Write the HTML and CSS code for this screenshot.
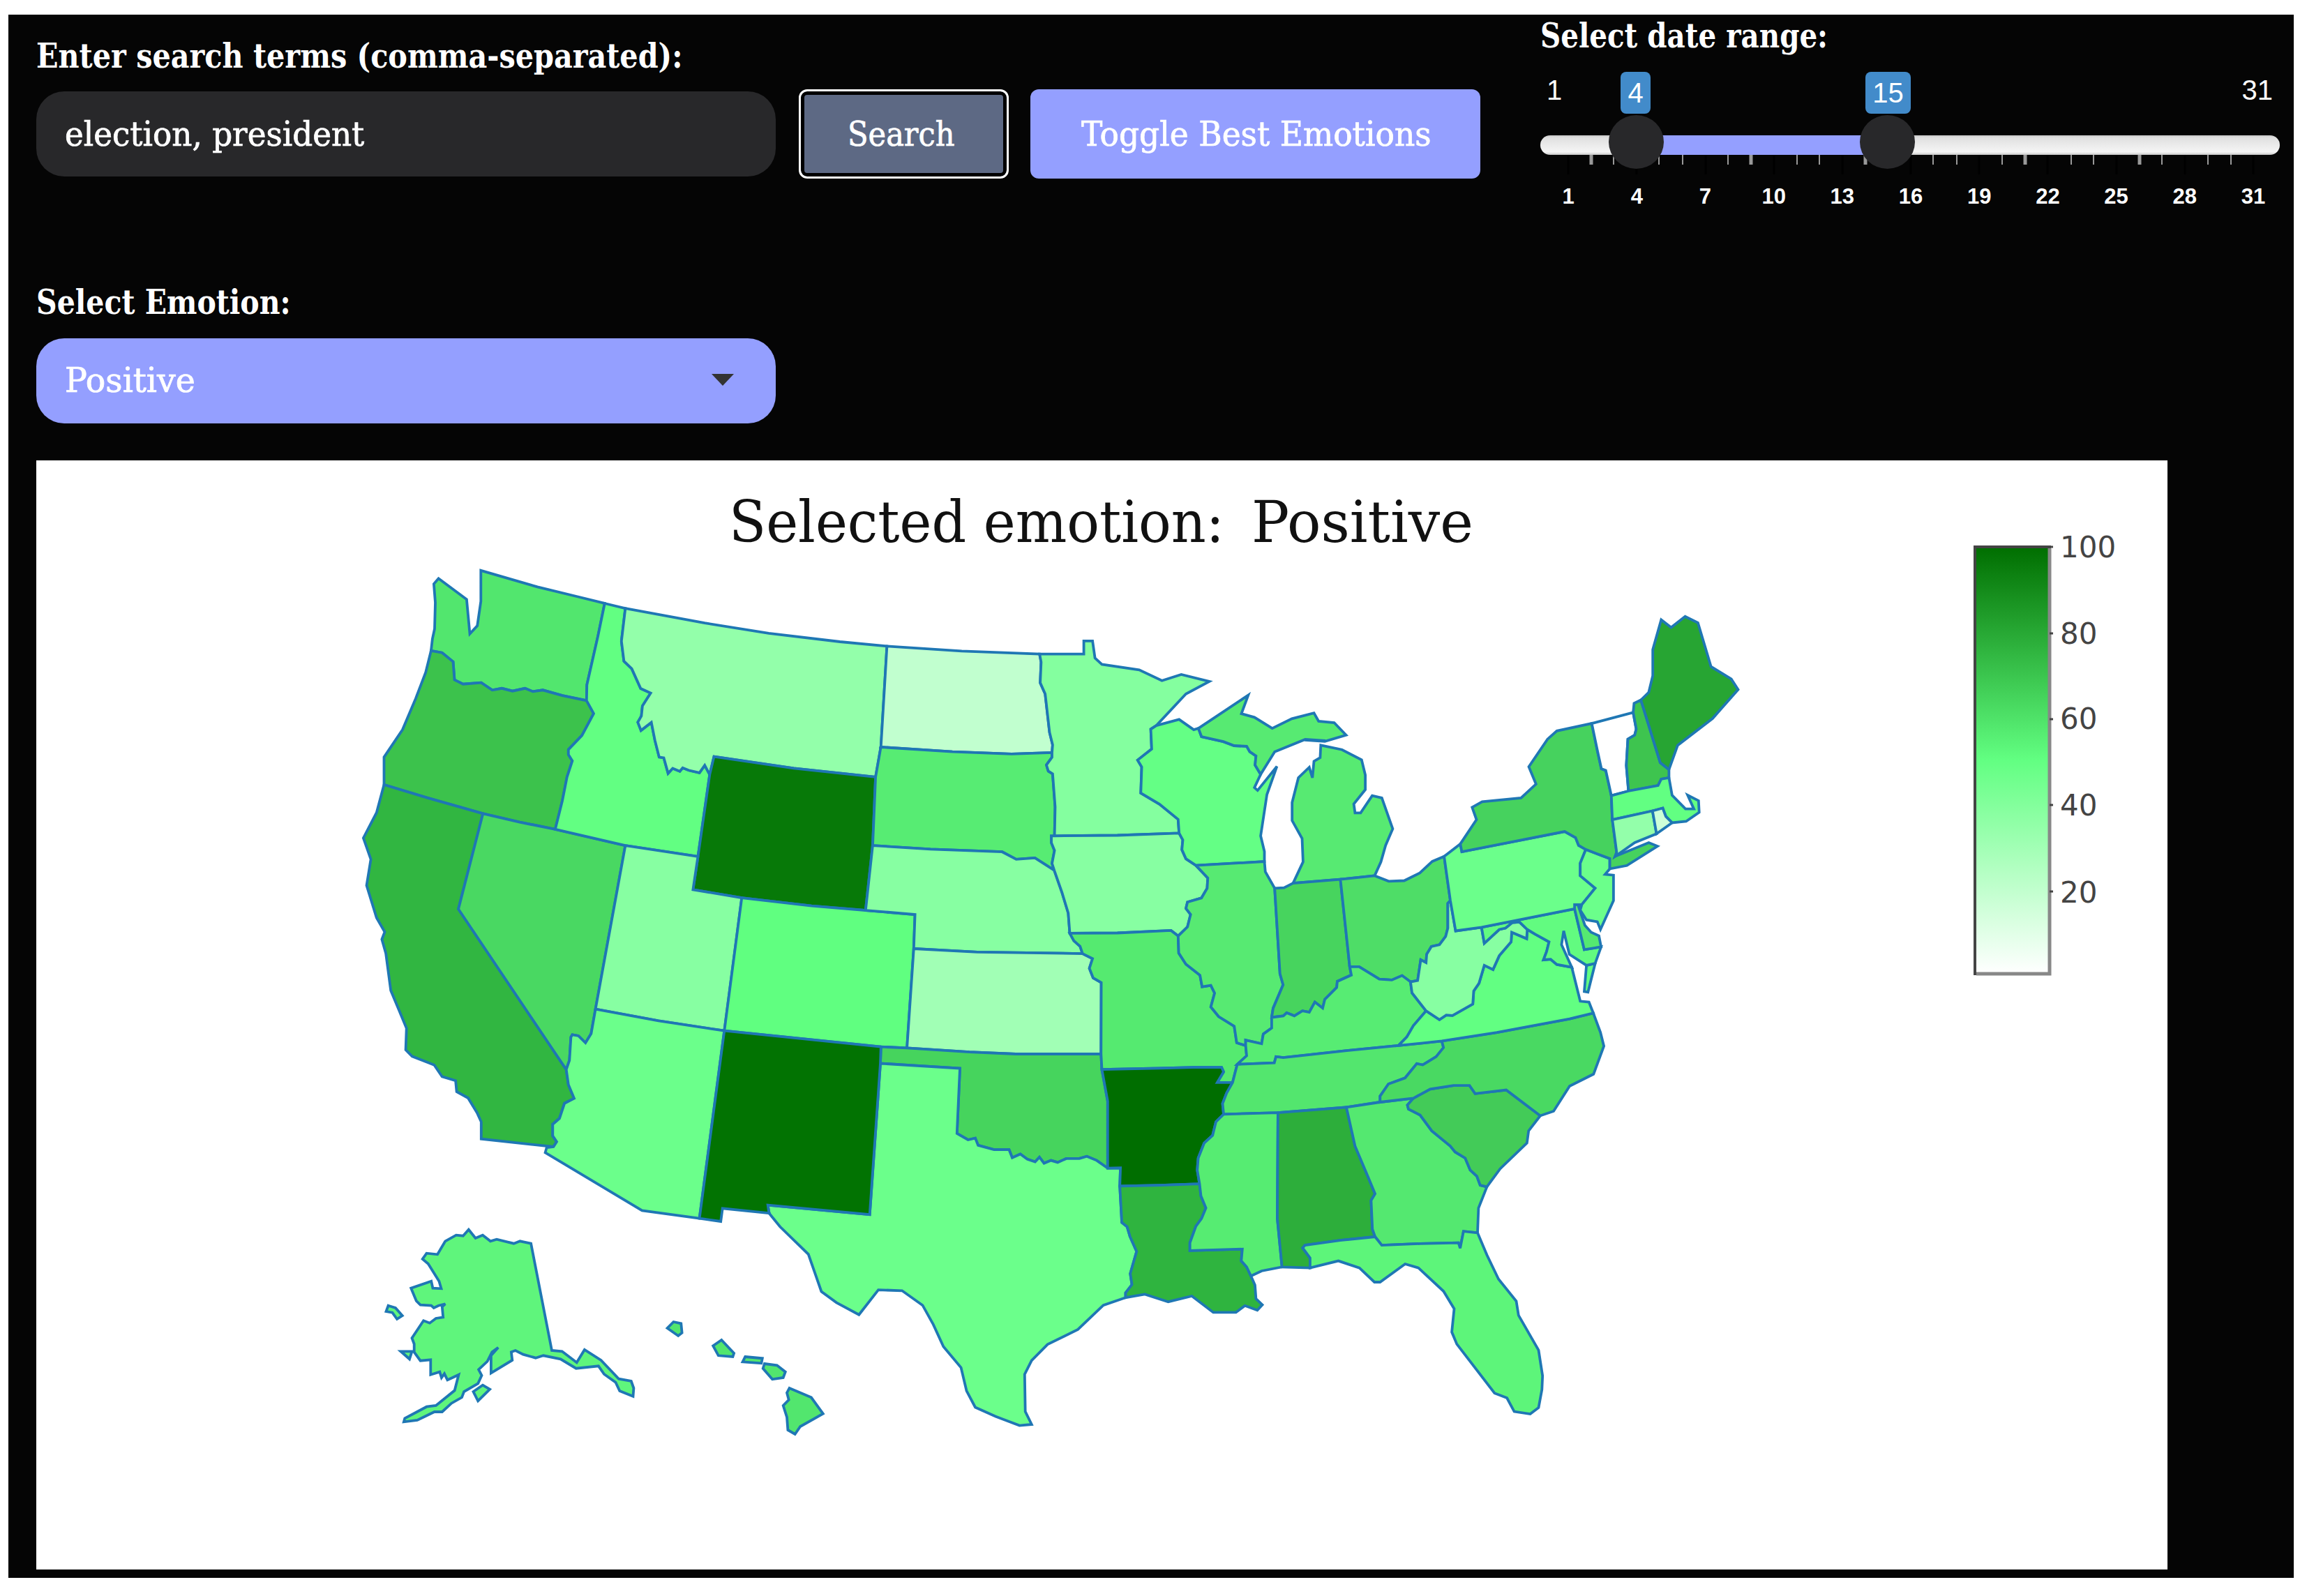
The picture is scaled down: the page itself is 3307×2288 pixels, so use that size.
FILE: index.html
```html
<!DOCTYPE html>
<html lang="en">
<head>
<meta charset="utf-8">
<title>Emotion map</title>
<link rel="stylesheet" href="styles.css">
</head>
<body>
<main class="panel">
  <header class="controls">
    <section class="field search-field">
      <label class="label" for="terms"><span class="t-terms">Enter search terms (comma-separated):</span></label>
      <div class="input" id="terms"><span class="t-input">election, president</span></div>
    </section>
    <div class="buttons">
      <button class="btn btn-search"><span class="t-search">Search</span></button>
      <button class="btn btn-toggle"><span class="t-toggle">Toggle Best Emotions</span></button>
    </div>
    <section class="range">
      <div class="label"><span class="t-range">Select date range:</span></div>
      <div class="slider">
        <div class="limits"><span>1</span><span>31</span></div>
        <div class="track"></div>
        <div class="bar"></div>
        <span class="tag tag-from">4</span>
        <span class="tag tag-to">15</span>
        <svg class="ticks" width="1060" height="30" viewBox="2208 222 1060 30">
          <path class="tick-big" d="M2248 222v28M2346 222v28M2445 222v28M2543 222v28M2641 222v28M2739 222v28M2837 222v28M2935 222v28M3034 222v28M3132 222v28M3230 222v28"/>
          <path class="tick-small" d="M2313 222v14M2378 222v14M2412 222v14M2477 222v14M2576 222v14M2608 222v14M2771 222v14M2805 222v14M2870 222v14M2969 222v14M3001 222v14M3099 222v14M3165 222v14M3198 222v14"/>
          <path class="tick-wide" d="M2281 222v14M2510 222v14M2674 222v14M2903 222v14M3067 222v14"/>
        </svg>
        <i class="handle handle-from"></i>
        <i class="handle handle-to"></i>
        <div class="days"><span>1</span><span>4</span><span>7</span><span>10</span><span>13</span><span>16</span><span>19</span><span>22</span><span>25</span><span>28</span><span>31</span></div>
      </div>
    </section>
  </header>
  <section class="field emotion">
    <div class="label"><span class="t-emotion">Select Emotion:</span></div>
    <div class="select"><span class="t-select">Positive</span><svg width="32" height="17" viewBox="0 0 32 17"><path d="M0 0H32L16 17Z" fill="#333"/></svg></div>
  </section>
  <section class="chart">
    <svg width="3055" height="1590" viewBox="52 660 3055 1590">
      <defs>
        <linearGradient id="scale" x1="0" y1="0" x2="0" y2="1">
          <stop offset="0" stop-color="#006e00"/>
          <stop offset=".5" stop-color="#62ff82"/>
          <stop offset="1" stop-color="#fff"/>
        </linearGradient>
      </defs>
      <text class="title" x="1045" y="777" textLength="710" lengthAdjust="spacingAndGlyphs">Selected emotion:</text>
      <text class="title" x="1794" y="777" textLength="318" lengthAdjust="spacingAndGlyphs">Positive</text>
      <g id="states" class="states"></g>
      <rect class="colorbar" x="2831" y="784" width="107" height="612" fill="url(#scale)"/>
      <path class="cb-shade" d="M2938 786V1396H2833"/>
      <path class="cb-tick" d="M2938 784h5M2938 908h5M2938 1031h5M2938 1154h5M2938 1278h5"/>
      <g class="cb-labels">
        <text x="2953" y="799">100</text>
        <text x="2953" y="923">80</text>
        <text x="2953" y="1045">60</text>
        <text x="2953" y="1169">40</text>
        <text x="2953" y="1294">20</text>
      </g>
    </svg>
  </section>
</main>
<script src="map.js"></script>
</body>
</html>
```
FILE: styles.css
```css
* { box-sizing: border-box; }
body { margin: 0; background: #fff; color: #fff; font-family: "Roboto Slab", "DejaVu Serif Condensed", "DejaVu Serif", serif; }
.panel { margin: 21px 19px 0 12px; height: 2241px; padding: 0 0 12px 40px; background: #050505; display: flex; flex-direction: column; }
.controls { display: flex; height: 354px; }
.search-field { padding-top: 29px; }
.field { width: 1060px; }
.label { display: block; height: 60px; line-height: 60px; font-size: 49px; font-weight: 700; white-space: nowrap; }
.label span, .input span, .select span, .btn span { display: inline-block; transform-origin: 0 50%; white-space: nowrap; }
.input span, .select span, .btn span { -webkit-text-stroke: .7px #fff; }
.label .t-terms { transform: scaleX(.938); }
.label .t-range { transform: scaleX(.917); }
.label .t-emotion { transform: scaleX(.931); }
.input .t-input { transform: scaleX(1.048); }
.select .t-select { transform: scaleX(1.098); }
.btn .t-toggle { transform: scaleX(1.055); }
.input, .select { height: 122px; border-radius: 40px; padding: 0 41px; display: flex; align-items: center; font-size: 48px; }
.input { margin-top: 21px; background: #28282a; }
.select { margin-top: 22px; background: #949fff; justify-content: space-between; padding: 0 60px 3px 41px; }
.emotion { padding-top: 28px; height: 285px; }
.buttons { display: flex; gap: 31px; padding-top: 107px; margin-left: 33px; }
.btn { height: 128px; border: 0; border-radius: 12px; color: #fff; font: 48px "Roboto Slab", "DejaVu Serif Condensed", "DejaVu Serif", serif; display: flex; align-items: center; }
.btn-search { width: 301px; border: 3px solid #fff; box-shadow: inset 0 0 0 5px #000; background: #5d6984; padding: 0 0 0 67px; }
.btn-toggle { width: 645px; background: #949fff; padding: 0 0 0 73px; }
.range { width: 1060px; margin-left: 86px; }
.slider { position: relative; height: 230px; font-family: "Liberation Sans", Arial, sans-serif; font-size: 40px; }
.limits { display: flex; justify-content: space-between; padding: 25px 10px 0 9px; line-height: 46px; }
.track { margin-top: 42px; height: 28px; border-radius: 14px; background: linear-gradient(#c8c8c8, #e0e0e0 12%, #f5f5f5 85%, #c8c8c8); }
.bar { position: absolute; left: 138px; top: 113px; width: 360px; height: 28px; background: #949fff; }
.tag { position: absolute; top: 22px; height: 60px; line-height: 60px; border-radius: 8px; background: #428bca; text-align: center; }
.tag-from { left: 115px; width: 43px; }
.tag-to { left: 466px; width: 65px; }
.ticks { display: block; }
.tick-big { stroke: #000; stroke-width: 3; }
.tick-small { stroke: #999; stroke-width: 2; }
.tick-wide { stroke: #999; stroke-width: 5; }
.handle { position: absolute; top: 84px; width: 79px; height: 77px; border-radius: 50%; background: #28282a; }
.handle-from { left: 98px; }
.handle-to { left: 458px; }
.days { display: grid; grid-template-columns: repeat(11, 98.2px); margin: 10px 0 0 -9px; text-align: center; font-size: 31px; font-weight: 700; line-height: 40px; }
.chart { width: 3055px; height: 1590px; background: #fff; }
.chart svg { display: block; }
.title { font-family: "Roboto Slab", "DejaVu Serif", serif; font-size: 83px; fill: #111; }
.states path { stroke: #1f77b4; stroke-width: 3.8; stroke-linejoin: miter; }
.colorbar { stroke: #444; stroke-width: 4; }
.cb-shade { fill: none; stroke: #888; stroke-width: 5; }
.cb-tick { stroke: #444; stroke-width: 3; }
.cb-labels { font: 42px "DejaVu Sans", Verdana, sans-serif; fill: #444; }
```
FILE: map.js
```javascript
// Sheets of the digitised map: x offset, y offset, units per pixel across and down.
const sheets = {
  A: [500, 780, 1.96, 2.8], B: [500, 1300, 1.96, 3], C: [1200, 880, 2.24, 2.529],
  D: [1500, 1400, 2.0907, 2.3059], E: [1850, 860, 2.24, 2.529],
  F: [520, 1720, 2.24, 3], G: [1000, 1460, 2.4123, 2.529], O: [0, 0, 0.4741, 0.4741]
};

// Shared borders; each is stored once, with the sheet letter before its points.
const arcs = {
  waCoast: "A 231,428 235,380 241,340 243,235 239,160 252,138 331,222 340,360 361,328 371,230 371,106 530,172 640,210 719,238",
  waId: "A 719,238 700,370 669,565 668,628",
  waOr: "A 231,428 262,436 293,472 297,545 321,562 372,556 403,586 430,579 460,590 495,579 517,592 545,586 600,608 668,628",
  orCoast: "A 99,966 99,855 151,745 188,620 216,515 231,428",
  orId: "A 668,628 688,680 655,768 617,825 617,845 628,870 613,935 600,1030 580,1145",
  orCa: "A 99,966 220,1018 377,1082",
  orNv: "A 377,1082 480,1116 580,1145",
  idNv: "A 580,1145 777,1210",
  idUt: "A 777,1210 981,1254",
  idTop: "A 719,238 777,258",
  idMt: "A 777,258 766,390 773,470 795,500 820,580 848,598 825,650 822,690 812,715 821,748 850,716 860,788 872,855 885,858 897,920 910,900 930,912 938,898 955,908 985,918 1000,888 1014,925",
  idWy: "A 1014,925 981,1254",
  mtWy: "A 1014,925 1026,853 1250,900 1480,935",
  utWy: "A 981,1254 967,1387 1104,1420",
  mtTop: "A 777,258 1000,317 1180,358 1380,392 1512,410",
  mtNd: "A 1512,410 1495,812",
  mtSd: "A 1495,812 1480,935",
  wySd: "A 1480,935 1472,1208",
  wyNe: "A 1472,1208 1452,1470",
  wyCo: "A 1452,1470 1300,1452 1104,1420",
  utCo: "A 1104,1420 B 1055,533",
  utNv: "A 777,1210 B 693,440",
  utAz: "B 693,440 870,490 1055,533",
  caNv: "A 377,1082 308,1465 B 611,700",
  caCoast: "B 372,998 372,925 360,885 335,822 303,795 300,748 262,730 240,680 178,643 160,615 162,522 140,440 118,360 104,200 93,140 101,108 A 78,1500 50,1370 62,1265 41,1180 78,1078 99,966",
  caMex: "B 372,998 575,1032",
  caAz: "B 575,1032 584,1010 573,985 573,935 592,910 606,845 633,824 617,765 611,700",
  nvAz: "B 611,700 620,660 624,560 628,550 645,555 665,585 681,545 693,440",
  azMex: "B 575,1032 556,1035 552,1057 824,1306 985,1340",
  azNm: "B 985,1340 1055,533",
  nmMex: "B 985,1340 1045,1353 1050,1297 1185,1318",
  nmTx: "G 247,706 243,677 595,711 632,163",
  nmOk: "G 632,163 634,103",
  nmCo: "B 1055,533 G 634,103",
  coOk: "G 634,103 724,107",
  coKs: "C 246,1214 G 724,107",
  coNe: "C 92,1075 250,1090 246,1214",
  txCoast: "G 247,706 285,755 383,855 408,930 428,990 480,1030 558,1074 625,984 707,987 778,1040 815,1110 850,1190 911,1266 930,1350 960,1410 1030,1443 1113,1476 1155,1472 1133,1425 1131,1290 1155,1240 1210,1182 1315,1128 1403,1040 1480,1012",
  txLa: "G 1480,1012 1480,995 1502,965 1496,925 1518,845 1495,790 1485,755 1467,740 1460,608",
  txAr: "G 1460,608 1462,542 1418,543",
  txOk: "G 1418,543 1380,515 1346,500 1320,508 1275,508 1245,522 1222,515 1198,525 1182,503 1167,520 1140,510 1116,492 1088,505 1077,476 1025,476 970,460 960,434 935,440 897,417 907,181 632,163",
  okKs: "G 724,107 940,122 1100,129 1395,129",
  okMo: "G 1395,129 1398,185",
  okAr: "G 1398,185 1418,300 1418,543",
  arMo: "G 1398,185 D 340,303 440,300 525,300 531,315 512,350 558,350",
  arTn: "D 558,350 540,385 528,420 531,455",
  arMs: "D 531,455 508,480 498,525 473,550 455,600 452,640 459,685",
  arLa: "G 1460,608 D 340,690 459,685",
  laMs: "D 459,685 463,725 478,765 465,800 448,825 430,880 430,906 587,901 584,940 600,960 613,990",
  laCoast: "D 613,990 625,1020 628,1065 647,1085 632,1103 595,1088 568,1110 500,1110 436,1056 365,1075 295,1050 G 1480,1012",
  msCoast: "D 613,990 645,973 706,960",
  msAl: "D 706,960 692,800 694,450",
  tnMs: "D 531,455 694,450",
  alCoast: "D 706,960 790,963",
  alFl: "D 790,963 790,930 768,897 775,888 880,872 985,860",
  alGa: "D 985,860 977,835 973,740 985,718 965,665 925,560 899,432",
  tnAl: "D 694,450 899,432",
  tnGa: "D 899,432 1000,415",
  ncGa: "D 1000,415 1100,402",
  gaSc: "D 1100,402 1082,425 1085,438 1120,458 1155,510 1210,560 1225,580 1255,600 1270,640 1290,660 1300,690 1320,695",
  gaCoast: "D 1320,695 1295,765 1292,847",
  gaFl: "D 985,860 1005,888 1120,883 1235,880 1240,898 1250,842 1292,847",
  flCoast: "D 1292,847 1320,920 1355,1000 1408,1073 1415,1120 1475,1235 1487,1320 1485,1365 1475,1425 1450,1446 1402,1438 1380,1393 1343,1377 1230,1215 1215,1175 1222,1098 1190,1040 1115,963 1075,950 1000,1010 983,1010 938,963 875,940 790,963",
  scNc: "D 1100,402 1150,372 1220,360 1268,360 1285,387 1378,375 1480,460",
  scCoast: "D 1480,460 1445,510 1440,550 1360,635 1320,695",
  ncCoast: "E 972,1498 995,1568 O 1090,711 1083,730 D 1568,362 1520,445 1480,460",
  ncTn: "D 1000,415 1000,395 1025,355 1075,335 1110,288 1128,292 1168,265 1190,235 1185,213",
  ncVa: "D 1185,213 1350,185 1568,140 E 972,1498",
  tnMo: "D 558,350 565,320 572,290",
  kyMo: "D 572,290 600,262 597,228",
  kyIl: "D 597,228 597,210 645,222 650,190 675,170 675,135",
  moIl: "C 1095,1168 1097,1230 1120,1270 1165,1310 1172,1352 1200,1347 1212,1375 1200,1425 1225,1460 1275,1495 1283,1555 D 597,228",
  tnKy: "D 572,290 683,285 688,265 710,268 900,245 1055,228",
  tnVa: "D 1055,228 1185,213",
  kyVa: "D 1055,228 1080,200 1100,162 E 435,1490",
  vaWv: "E 435,1490 478,1522 500,1505 520,1507 585,1465 588,1418 605,1390 622,1325 650,1340 670,1290 708,1240 710,1205 758,1228 760,1195",
  vaMd: "E 760,1195 785,1212 830,1240 822,1275 812,1305 835,1303 855,1322 903,1332",
  mdBay: "E 903,1332 870,1250 877,1200 895,1285 950,1325 978,1318",
  mdCoast: "E 997,1258 978,1318",
  mdDe: "E 912,1120 943,1268 997,1258",
  vaCoast: "E 903,1332 930,1455 958,1458 972,1498",
  vaShore: "E 950,1325 978,1318 955,1422 943,1420",
  mdWv: "E 760,1195 735,1168 712,1170 690,1190 670,1195 622,1245 613,1187",
  mdPa: "E 613,1187 912,1120",
  wvPa: "E 613,1187 530,1200 513,1090",
  ohPa: "E 493,930 513,1090",
  ohWv: "E 513,1090 505,1100 505,1190 498,1220 478,1250 452,1257 437,1285 435,1315 418,1305 408,1380 385,1385",
  kyWv: "E 385,1385 390,1425 435,1490",
  ohKy: "E 385,1385 358,1362 325,1378 285,1375 220,1330 190,1330",
  kyIn: "E 190,1330 195,1360 150,1383 148,1405 110,1448 103,1480 78,1458 60,1495 38,1490 12,1508 D 720,120 710,130 675,135",
  ilIn: "C 1405,995 1422,1305 1432,1345 1400,1430 D 675,135",
  inLake: "C 1405,995 1435,993 E 8,1027",
  inMi: "E 8,1027 160,1013",
  inOh: "E 160,1013 190,1330",
  miOh: "E 160,1013 270,1000",
  ohLake: "E 270,1000 315,1020 365,1018 415,990 455,948 493,930",
  paLake: "E 493,930 545,885",
  nyPa: "E 545,885 550,913 880,840 915,862 925,890 948,905",
  paNj: "E 948,905 930,955 930,1000 978,1045 935,1105",
  paDe: "E 935,1105 912,1105 912,1120",
  nyNj: "E 948,905 1025,938 1025,975",
  njCoast: "E 1025,975 1010,995 1037,998 1037,1090 995,1195 985,1167 950,1160 930,1125 935,1105",
  deCoast: "E 935,1105 925,1112 945,1180 965,1205 990,1218 997,1258",
  nyLake: "E 545,885 597,797 583,752 615,732 740,718 788,668 765,605 825,505 855,475 967,448",
  nyVt: "E 967,448 985,545 998,612 1012,618 1030,710",
  nyMa: "E 1030,710 1033,797",
  nyCt: "E 1033,797 1047,915 1042,930",
  nyIsland: "E 1042,930 1150,880 1178,893 1080,963 1025,975",
  vtTop: "E 967,448 1100,408",
  vtNh: "E 1100,408 1110,468 1105,490 1083,505 1078,600 1085,693",
  vtMa: "E 1030,710 1085,693",
  nhTop: "E 1100,408 1103,375 1125,363",
  nhMe: "E 1125,363 1187,590 1215,615",
  meCoast: "E 1125,363 1150,335 1163,275 1163,180 1190,72 1222,100 1267,60 1308,83 1350,242 1415,287 1437,325 1355,430 1243,527 1215,615",
  nhCoast: "E 1215,615 1215,645",
  nhMa: "E 1085,693 1180,673 1190,650 1215,645",
  maCoast: "E 1215,645 1225,708 1268,758 1295,758 1275,708 1310,728 1312,770 1270,803 1225,808",
  maRi: "E 1225,808 1205,785 1195,755 1162,765",
  maCt: "E 1162,765 1033,797",
  ctRi: "E 1162,765 1175,848",
  riCoast: "E 1225,808 1175,848",
  ctCoast: "E 1175,848 1105,880 1042,930",
  ndTop: "A 1512,410 C 400,135 650,146",
  ndMn: "C 650,146 655,175 652,250 668,290 682,430 692,475 690,503",
  ndSd: "C 140,483 370,500 560,508 690,503",
  sdMn: "C 690,503 690,520 672,548 678,570 692,580 700,700 698,805",
  mnIa: "C 698,805 900,803 1098,795",
  sdIa: "C 698,805 688,805 688,830 698,858 690,905 697,930",
  sdNe: "C 114,840 300,853 530,863 575,890 635,885 697,930",
  neIa: "C 697,930 722,1010 742,1085 747,1158",
  neMo: "C 747,1158 760,1185 780,1205 788,1232",
  neKs: "C 246,1214 450,1226 788,1232",
  ksMo: "C 788,1232 820,1250 810,1285 822,1320 848,1337 G 1395,129",
  iaMo: "C 747,1158 900,1157 1072,1148 1095,1168",
  iaIl: "C 1152,912 1190,958 1188,995 1170,1030 1125,1045 1120,1068 1135,1090 1125,1135 1095,1168",
  iaWi: "C 1098,795 1110,820 1107,855 1120,888 1152,912",
  mnWi: "C 1025,405 1007,418 1010,490 965,530 978,555 975,650 1035,690 1095,745 1098,795",
  mnTop: "C 650,146 792,146 792,98 820,98 828,160 850,183 970,203 1043,242 1105,220 1195,245 1120,290 1025,405",
  wiLake: "C 1025,405 1098,383 1145,420 1160,415",
  wiMi: "C 1160,415 1170,445 1240,463 1275,478 1315,480 1325,500 1345,515 1342,548 1360,582",
  wiBay: "C 1360,582 1340,630 1350,640 1412,553 1380,655 1360,805 1372,862 1372,898",
  wiIl: "C 1152,912 1372,898",
  ilLake: "C 1372,898 1375,935 1405,995",
  miUpper: "C 1160,415 1320,295 1298,362 1340,375 1397,415 1460,380 E 75,410 90,440 140,445 178,490 110,513 45,508 C 1568,460 1503,455 1405,500 1360,582",
  miLower: "E 8,1027 40,950 37,865 5,800 5,735 25,645 60,607 70,645 75,585 95,572 97,527 165,543 228,580 240,635 240,688 203,740 207,772 225,772 262,710 293,718 328,830 305,890 290,950 270,1000",
  akMain: "F 340,128 362,165 385,152 410,178 430,170 485,188 505,178 540,188 607,648 640,652 687,700 712,645 765,690 822,770 862,780 870,810 868,845 825,822 812,785 775,750 757,715 685,725 635,685 580,670 555,680 515,665 490,648 477,655 480,690 412,745 412,670 435,635 415,655 400,695 372,730 382,755 370,790 325,825 318,850 285,875 255,912 230,912 175,948 132,955 135,940 205,890 235,885 295,820 308,752 288,765 272,775 262,748 253,765 247,740 218,752 218,688 185,692 165,655 165,620 158,595 195,520 215,530 235,510 258,505 255,460 265,448 243,455 228,465 220,455 185,452 172,435 155,380 220,350 225,380 252,382 245,350 210,275 192,255 205,230 240,235 265,178 300,152 322,155",
  ak1: "F 82,455 105,465 127,498 110,513 95,485 75,480",
  ak2: "F 122,652 158,652 150,685",
  ak3: "F 385,797 408,815 370,865 355,825",
  hi1: "F 998,525 1022,532 1025,572 1013,585 978,552",
  hi2: "F 1152,603 1192,660 1188,675 1142,670 1125,628",
  hi3: "F 1228,675 1283,682 1280,703 1220,697",
  hi4: "F 1290,705 1330,712 1357,740 1350,765 1315,772 1285,725",
  hi5: "F 1370,810 1440,850 1478,920 1405,975 1388,1008 1365,990 1362,935 1350,885 1368,860 1362,830"
};

// State: fill, then rings of arcs ("-" walks an arc backwards, "/" starts a new ring).
const states = {
  WA: ["#52e66e", "waCoast waId -waOr"],
  OR: ["#3cc24c", "orCoast waOr orId -orNv -orCa"],
  CA: ["#31b641", "caCoast orCa caNv -caAz -caMex"],
  NV: ["#49d862", "orNv idNv utNv -nvAz -caNv"],
  ID: ["#62ff82", "idTop idMt idWy -idUt -idNv -orId -waId"],
  MT: ["#93ffaa", "mtTop mtNd mtSd -mtWy -idMt"],
  WY: ["#077908", "mtWy wySd wyNe wyCo -utWy -idWy"],
  UT: ["#87ffa2", "idUt utWy utCo -utAz -utNv"],
  AZ: ["#6bff8b", "utAz -azNm -azMex caAz nvAz"],
  CO: ["#60ff80", "-wyCo coNe coKs -coOk -nmCo -utCo"],
  ND: ["#c1ffcf", "ndTop ndMn -ndSd -mtNd"],
  SD: ["#57ec73", "ndSd sdMn sdIa -sdNe -wySd -mtSd"],
  NE: ["#87ffa2", "sdNe neIa neMo -neKs -coNe -wyNe"],
  KS: ["#a1ffb5", "neKs ksMo -okKs -coKs"],
  OK: ["#46d45d", "coOk okKs okMo okAr txOk nmOk"],
  TX: ["#6bff8b", "nmTx -txOk -txAr -txLa -txCoast"],
  NM: ["#027302", "nmCo -nmOk -nmTx -nmMex azNm"],
  MN: ["#84ff9f", "mnTop mnWi -mnIa -sdMn -ndMn"],
  IA: ["#87ffa2", "mnIa iaWi iaIl -iaMo -neIa -sdIa"],
  MO: ["#55ea70", "iaMo moIl -kyMo -tnMo -arMo -okMo -ksMo -neMo"],
  AR: ["#006e00", "arMo arTn arMs -arLa txAr -okAr"],
  LA: ["#2fb43f", "arLa laMs laCoast txLa"],
  WI: ["#64ff85", "wiLake wiMi wiBay -wiIl -iaWi -mnWi"],
  IL: ["#57ea72", "wiIl ilLake ilIn -kyIl -moIl -iaIl"],
  MI: ["#57ea72", "miUpper -wiMi / miLower -miOh -inMi"],
  IN: ["#47d45e", "inLake inMi inOh kyIn -ilIn"],
  OH: ["#4edd67", "miOh ohLake ohPa ohWv ohKy -inOh"],
  KY: ["#57ec73", "kyIl -kyIn -ohKy kyWv -kyVa -tnKy kyMo"],
  TN: ["#53e66e", "tnKy tnVa -ncTn -tnGa -tnAl -tnMs -arTn tnMo"],
  MS: ["#56ec72", "tnMs -msAl -msCoast -laMs -arMs"],
  AL: ["#2dae3b", "tnAl -alGa -alFl -alCoast msAl"],
  GA: ["#54e870", "tnGa ncGa gaSc gaCoast -gaFl alGa"],
  FL: ["#5df57a", "alFl gaFl flCoast"],
  SC: ["#43cb58", "scNc scCoast -gaSc"],
  NC: ["#49d962", "ncVa ncCoast -scNc -ncGa ncTn"],
  VA: ["#62ff82", "vaWv vaMd vaCoast -ncVa -tnVa kyVa / vaShore"],
  WV: ["#87ffa2", "ohWv kyWv vaWv mdWv wvPa"],
  MD: ["#62fb80", "mdPa mdDe mdCoast -mdBay -vaMd mdWv"],
  DE: ["#55e871", "deCoast -mdDe -paDe"],
  PA: ["#6bff8b", "paLake nyPa paNj paDe -mdPa wvPa -ohPa"],
  NJ: ["#6bff8b", "nyNj njCoast -paNj"],
  NY: ["#46d25e", "nyLake nyVt nyMa nyCt nyIsland -nyNj -nyPa"],
  VT: ["#ffffff", "vtTop vtNh -vtMa -nyVt"],
  NH: ["#3ec44f", "nhTop nhMe nhCoast -nhMa -vtNh"],
  ME: ["#27a533", "meCoast -nhMe"],
  MA: ["#62ff82", "vtMa nhMa maCoast maRi maCt -nyMa"],
  CT: ["#93ffaa", "-maCt ctRi ctCoast -nyCt"],
  RI: ["#cdffd8", "-maRi riCoast -ctRi"],
  AK: ["#5ff57c", "akMain / ak1 / ak2 / ak3"],
  HI: ["#52e66e", "hi1 / hi2 / hi3 / hi4 / hi5"]
};

function arcPoints(name) {
  const back = name[0] === "-";
  const out = [];
  let sheet;
  for (const token of arcs[back ? name.slice(1) : name].split(" ")) {
    if (sheets[token]) { sheet = sheets[token]; continue; }
    const [x, y] = token.split(",").map(Number);
    out.push((sheet[0] + x / sheet[2]).toFixed(1) + " " + (sheet[1] + y / sheet[3]).toFixed(1));
  }
  return back ? out.reverse() : out;
}

const layer = document.getElementById("states");
for (const [id, [fill, rings]] of Object.entries(states)) {
  const path = document.createElementNS("http://www.w3.org/2000/svg", "path");
  path.setAttribute("d", rings.split(" / ").map(r => "M" + r.split(" ").flatMap(arcPoints).join("L") + "Z").join(""));
  path.setAttribute("fill", fill);
  path.setAttribute("id", id);
  layer.appendChild(path);
}
```
